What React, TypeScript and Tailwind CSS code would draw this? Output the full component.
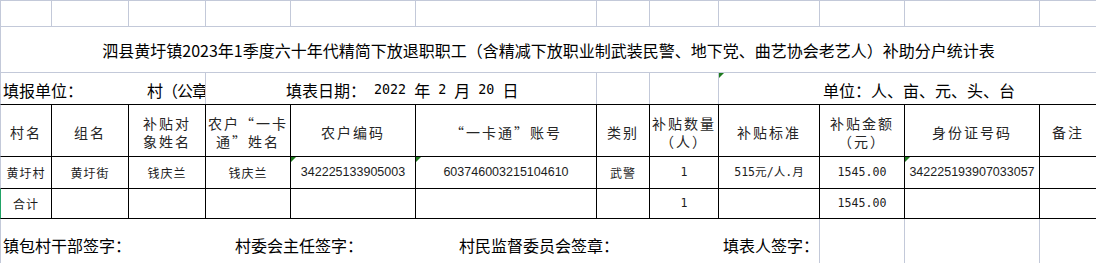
const W = [
  "w-[51px]",
  "w-[77px]",
  "w-[77px]",
  "w-[85px]",
  "w-[125px]",
  "w-[181px]",
  "w-[53px]",
  "w-[69px]",
  "w-[101px]",
  "w-[85px]",
  "w-[135px]",
  "w-[57px]",
];

const head = [
  ["村名"],
  ["组名"],
  ["补贴对", "象姓名"],
  ["农户“一卡", "通”姓名"],
  ["农户编码"],
  ["“一卡通”账号"],
  ["类别"],
  ["补贴数量", "（人）"],
  ["补贴标准"],
  ["补贴金额", "（元）"],
  ["身份证号码"],
  ["备注"],
];

type Kind = "cn" | "id" | "mono";
type Cell = { t: string; k: Kind; flag?: boolean };

const K: Record<Kind, string> = {
  cn: "text-[12px] tracking-[1px] font-['Noto_Sans_CJK_SC',sans-serif]",
  id: "text-[12.5px] font-['Liberation_Sans','Noto_Sans_CJK_SC',sans-serif]",
  mono: "text-[11.6px] font-['DejaVu_Sans_Mono','Noto_Sans_CJK_SC',monospace]",
};

const dataRow: Cell[] = [
  { t: "黄圩村", k: "cn" },
  { t: "黄圩街", k: "cn" },
  { t: "钱庆兰", k: "cn" },
  { t: "钱庆兰", k: "cn" },
  { t: "342225133905003", k: "id", flag: true },
  { t: "603746003215104610", k: "id", flag: true },
  { t: "武警", k: "cn" },
  { t: "1", k: "mono" },
  { t: "515元/人.月", k: "mono" },
  { t: "1545.00", k: "mono" },
  { t: "342225193907033057", k: "id", flag: true },
  { t: "", k: "cn" },
];

const totalRow: Cell[] = [
  { t: "合计", k: "cn" },
  { t: "", k: "cn" },
  { t: "", k: "cn" },
  { t: "", k: "cn" },
  { t: "", k: "cn" },
  { t: "", k: "cn" },
  { t: "", k: "cn" },
  { t: "1", k: "mono" },
  { t: "", k: "cn" },
  { t: "1545.00", k: "mono" },
  { t: "", k: "cn" },
  { t: "", k: "cn" },
];

// little green "number stored as text" marker
function Flag() {
  return (
    <span className="absolute left-0 top-0 h-0 w-0 border-t-[5px] border-r-[5px] border-t-[#1d7a1d] border-r-transparent" />
  );
}

function Mono({ children }: { children: string }) {
  return (
    <span className="whitespace-pre text-[13.33px] font-['DejaVu_Sans_Mono',monospace]">
      {children}
    </span>
  );
}

function BodyRow({ cells, green, tall }: { cells: Cell[]; green?: boolean; tall?: boolean }) {
  return (
    <div
      className={`flex border-b border-l border-b-black ${tall ? "h-[32px]" : "h-[30px]"} ${
        green ? "border-l-[#21a366]" : "border-l-[#c3c9d9]"
      }`}
    >
      {cells.map((c, i) => (
        <div
          key={i}
          className={`${W[i]} relative flex h-full shrink-0 items-center justify-center whitespace-nowrap border-r border-black text-[#1c1c1c] ${K[c.k]}`}
        >
          {c.flag && <Flag />}
          {c.t}
        </div>
      ))}
    </div>
  );
}

export default function App() {
  return (
    <div className="h-[263px] w-[1096px] overflow-hidden bg-white font-['Noto_Sans_CJK_SC',sans-serif] text-black">
      {/* blank sheet row */}
      <div className="flex h-[27px] border-y border-l border-[#c3c9d9]">
        {W.map((w, i) => (
          <div key={i} className={`${w} h-full shrink-0 border-r border-[#c3c9d9]`} />
        ))}
      </div>

      {/* title */}
      <div className="flex h-[46px] items-center justify-center border-b border-l border-[#c3c9d9] text-[16px] leading-none">
        泗县黄圩镇2023年1季度六十年代精简下放退职职工（含精减下放职业制武装民警、地下党、曲艺协会老艺人）补助分户统计表
      </div>

      {/* info row */}
      <div className="flex h-[31px] border-l border-[#c3c9d9] text-[16px] leading-none">
        <div className="flex w-[205px] shrink-0 items-center overflow-hidden whitespace-nowrap border-r border-[#c3c9d9] pt-[3px]">
          <span className="ml-[2px] w-[144px] shrink-0">填报单位：</span>
          <span className="tracking-[-1px]">村（公章</span>
        </div>
        <div className="flex w-[391px] shrink-0 items-center whitespace-nowrap border-r border-[#c3c9d9] pl-[80px] pt-[3px]">
          填表日期：<Mono> 2022 </Mono>年<Mono> 2 </Mono>月<Mono> 20 </Mono>日
        </div>
        <div className="w-[53px] shrink-0 border-r border-[#c3c9d9]" />
        <div className="w-[69px] shrink-0 border-r border-[#c3c9d9]" />
        <div className="relative flex w-[378px] shrink-0 items-center whitespace-nowrap pl-[104px] pt-[3px]">
          <Flag />
          单位：人、亩、元、头、台
        </div>
      </div>

      {/* table header */}
      <div className="flex h-[53px] border-y border-l border-y-black border-l-[#c3c9d9]">
        {head.map((lines, i) => (
          <div
            key={i}
            className={`${W[i]} flex h-full shrink-0 flex-col items-center justify-center whitespace-nowrap border-r border-black pt-[3px] text-[14px] leading-[18px] tracking-[2px] text-[#262626]`}
          >
            {lines.map((l) => (
              <span key={l}>{l}</span>
            ))}
          </div>
        ))}
      </div>

      <BodyRow cells={dataRow} tall />
      <BodyRow cells={totalRow} green />

      {/* signatures */}
      <div className="flex h-[44px] border-l border-[#c3c9d9] text-[16px] leading-none">
        <div className="flex w-[819px] shrink-0 items-center whitespace-nowrap border-r border-[#c3c9d9] pt-[8px]">
          <span className="ml-[2px] w-[232px] shrink-0">镇包村干部签字：</span>
          <span className="w-[224px] shrink-0">村委会主任签字：</span>
          <span className="w-[264px] shrink-0">村民监督委员会签章：</span>
          <span>填表人签字：</span>
        </div>
        <div className="w-[85px] shrink-0 border-r border-[#c3c9d9]" />
        <div className="w-[135px] shrink-0 border-r border-[#c3c9d9]" />
        <div className="w-[57px] shrink-0" />
      </div>
    </div>
  );
}
